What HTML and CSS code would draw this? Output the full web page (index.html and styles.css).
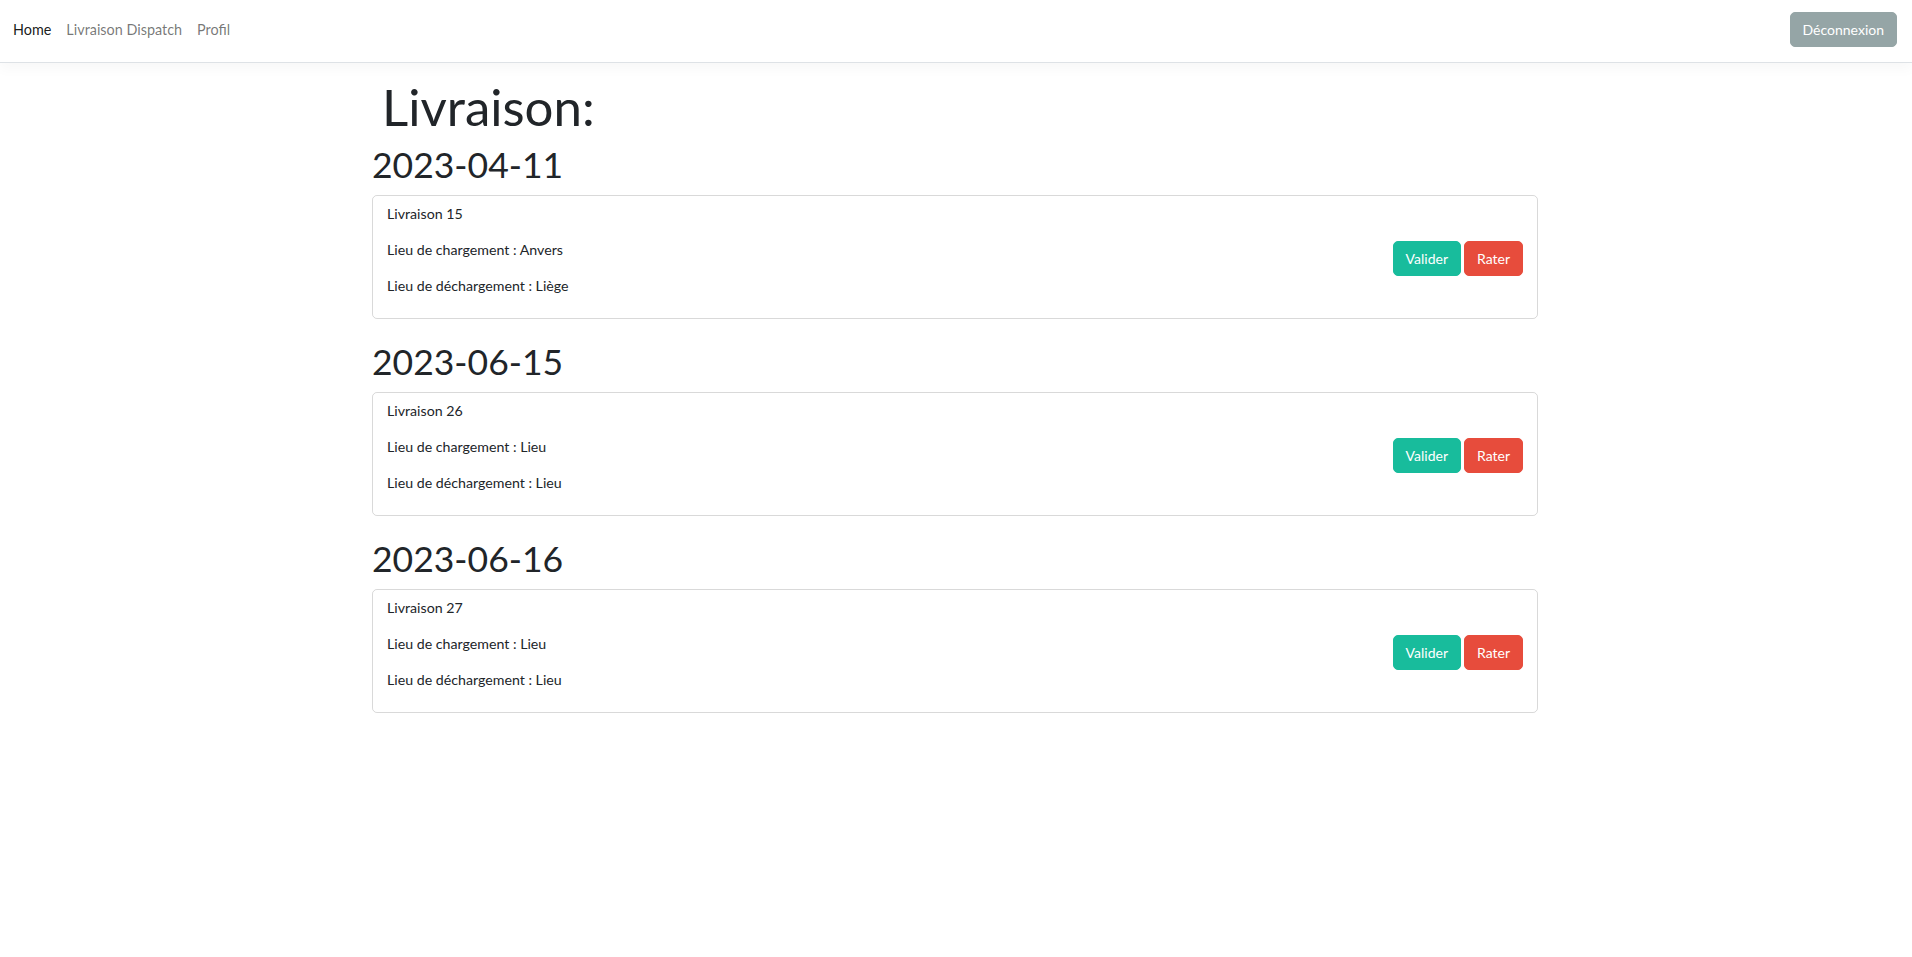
FILE: index.html
```html
<!DOCTYPE html>
<html lang="fr">
<head>
<meta charset="utf-8">
<title>Livraison</title>
<link rel="stylesheet" href="styles.css">
</head>
<body>
<nav class="navbar">
  <ul class="nav-links">
    <li><a class="nav-link active" href="#">Home</a></li>
    <li><a class="nav-link" href="#">Livraison Dispatch</a></li>
    <li><a class="nav-link" href="#">Profil</a></li>
  </ul>
  <button class="btn btn-secondary">Déconnexion</button>
</nav>
<main class="container">
  <h1 class="page-title">Livraison:</h1>

  <section class="day">
    <h2 class="day-title">2023-04-11</h2>
    <div class="card">
      <div class="card-info">
        <p>Livraison 15</p>
        <p>Lieu de chargement : Anvers</p>
        <p>Lieu de déchargement : Liège</p>
      </div>
      <div class="card-actions">
        <button class="btn btn-success">Valider</button>
        <button class="btn btn-danger">Rater</button>
      </div>
    </div>
  </section>

  <section class="day">
    <h2 class="day-title">2023-06-15</h2>
    <div class="card">
      <div class="card-info">
        <p>Livraison 26</p>
        <p>Lieu de chargement : Lieu</p>
        <p>Lieu de déchargement : Lieu</p>
      </div>
      <div class="card-actions">
        <button class="btn btn-success">Valider</button>
        <button class="btn btn-danger">Rater</button>
      </div>
    </div>
  </section>

  <section class="day">
    <h2 class="day-title">2023-06-16</h2>
    <div class="card">
      <div class="card-info">
        <p>Livraison 27</p>
        <p>Lieu de chargement : Lieu</p>
        <p>Lieu de déchargement : Lieu</p>
      </div>
      <div class="card-actions">
        <button class="btn btn-success">Valider</button>
        <button class="btn btn-danger">Rater</button>
      </div>
    </div>
  </section>
</main>
</body>
</html>
```

FILE: styles.css
```css
* { box-sizing: border-box; }

body {
  margin: 0;
  font-family: Lato, "Noto Sans", sans-serif;
  font-size: 14px;
  line-height: 1.5;
  color: #212529;
  background: #fff;
}

.navbar {
  height: 63px;
  display: flex;
  align-items: center;
  justify-content: space-between;
  padding: 0 15px 3px 5.5px;
  border-bottom: 1px solid #dee2e6;
  box-shadow: 0 6px 12px rgba(0, 0, 0, 0.03);
}

.nav-links {
  display: flex;
  list-style: none;
  margin: 0;
  padding: 0;
}

.nav-link {
  display: block;
  padding: 8px 7.5px;
  font-size: 14.4px;
  color: rgba(0, 0, 0, 0.55);
  text-decoration: none;
}

.nav-link.active { color: rgba(0, 0, 0, 0.9); }

.btn {
  font-family: inherit;
  font-size: 14px;
  line-height: 21px;
  color: #fff;
  border: 1px solid transparent;
  border-radius: 5px;
  padding: 6px 12px;
  cursor: pointer;
}

.btn-secondary { background: #95a5a6; border-color: #95a5a6; }
.btn-success { background: #18bc9c; border-color: #18bc9c; }
.btn-danger { background: #e74c3c; border-color: #e74c3c; }

.container {
  width: 1166px;
  margin: 0 0 0 calc((100% - 1168px) / 2);
}

.page-title {
  margin: 13px 0 7px;
  padding-left: 10px;
  font-size: 51px;
  font-weight: 400;
  line-height: 1.2;
}

.day-title {
  margin: 0 0 8.5px;
  font-size: 35.5px;
  font-weight: 400;
  line-height: 1.2;
}

.card {
  display: flex;
  align-items: center;
  justify-content: space-between;
  padding: 8px 14px 6px;
  border: 1px solid rgba(0, 0, 0, 0.15);
  border-radius: 5px;
  margin-bottom: 22px;
}

.card-info p {
  margin: 0 0 16px;
  font-size: 14.2px;
  line-height: 20px;
}

.card-actions {
  display: flex;
  gap: 3px;
}
```
